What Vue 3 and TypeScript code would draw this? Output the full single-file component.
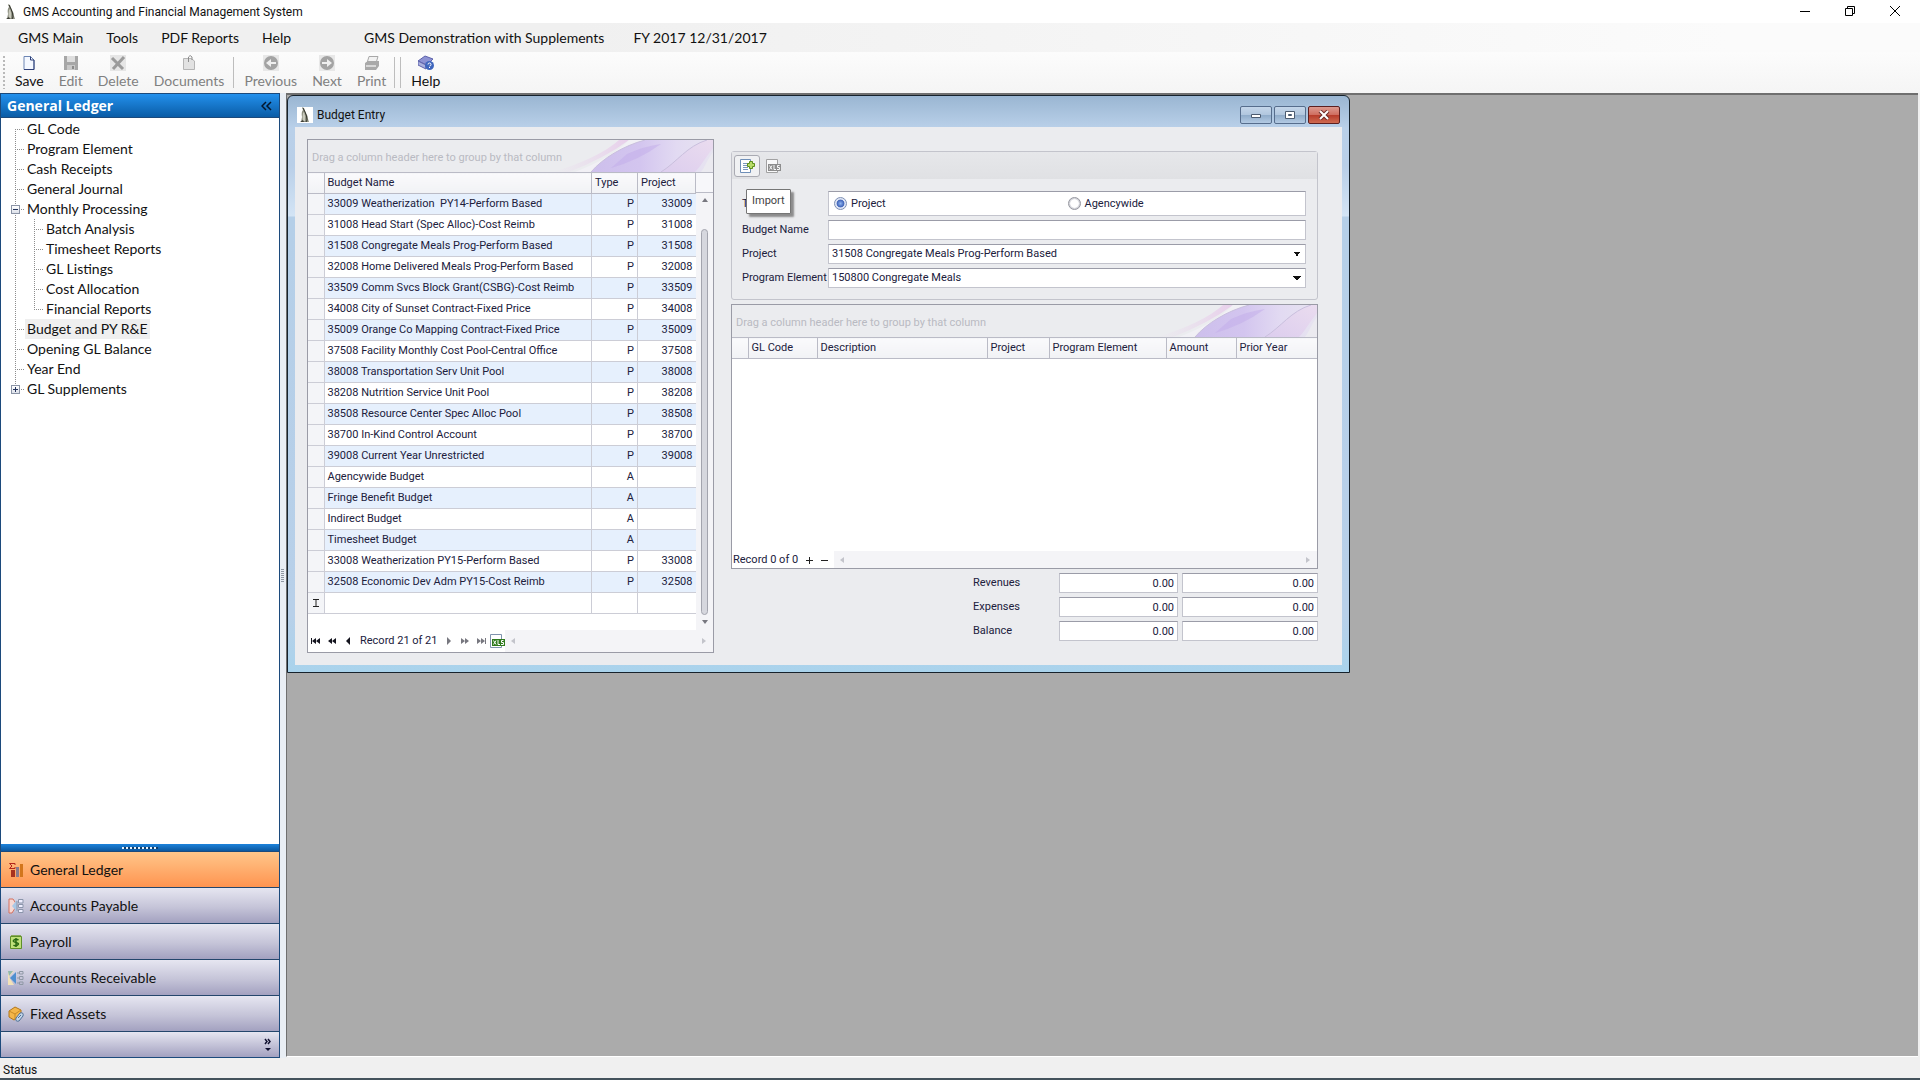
<script setup lang="ts">
import { ref } from 'vue'

interface Branch { label: string; child?: boolean; toggle?: string; selected?: boolean; edge?: string }
interface Budget { name: string; type: string; project: string }
interface Tool { label: string; icon: string; enabled?: boolean }

const menus = ['GMS Main', 'Tools', 'PDF Reports', 'Help']

const tools: Tool[][] = [
  [
    { label: 'Save', icon: 'save', enabled: true },
    { label: 'Edit', icon: 'edit' },
    { label: 'Delete', icon: 'delete' },
    { label: 'Documents', icon: 'documents' },
  ],
  [
    { label: 'Previous', icon: 'previous' },
    { label: 'Next', icon: 'next' },
    { label: 'Print', icon: 'print' },
  ],
  [],
  [{ label: 'Help', icon: 'help', enabled: true }],
]

const tree: Branch[] = [
  { label: 'GL Code', edge: 'first' },
  { label: 'Program Element' },
  { label: 'Cash Receipts' },
  { label: 'General Journal' },
  { label: 'Monthly Processing', toggle: 'minus' },
  { label: 'Batch Analysis', child: true },
  { label: 'Timesheet Reports', child: true },
  { label: 'GL Listings', child: true },
  { label: 'Cost Allocation', child: true },
  { label: 'Financial Reports', child: true, edge: 'last' },
  { label: 'Budget and PY R&E', selected: true },
  { label: 'Opening GL Balance' },
  { label: 'Year End' },
  { label: 'GL Supplements', toggle: 'plus', edge: 'last' },
]

const modules = [
  { label: 'General Ledger', icon: 'ledger' },
  { label: 'Accounts Payable', icon: 'payable' },
  { label: 'Payroll', icon: 'payroll' },
  { label: 'Accounts Receivable', icon: 'receivable' },
  { label: 'Fixed Assets', icon: 'assets' },
]
const activeModule = ref('General Ledger')

const budgets: Budget[] = [
  { name: '33009 Weatherization  PY14-Perform Based', type: 'P', project: '33009' },
  { name: '31008 Head Start (Spec Alloc)-Cost Reimb', type: 'P', project: '31008' },
  { name: '31508 Congregate Meals Prog-Perform Based', type: 'P', project: '31508' },
  { name: '32008 Home Delivered Meals Prog-Perform Based', type: 'P', project: '32008' },
  { name: '33509 Comm Svcs Block Grant(CSBG)-Cost Reimb', type: 'P', project: '33509' },
  { name: '34008 City of Sunset Contract-Fixed Price', type: 'P', project: '34008' },
  { name: '35009 Orange Co Mapping Contract-Fixed Price', type: 'P', project: '35009' },
  { name: '37508 Facility Monthly Cost Pool-Central Office', type: 'P', project: '37508' },
  { name: '38008 Transportation Serv Unit Pool', type: 'P', project: '38008' },
  { name: '38208 Nutrition Service Unit Pool', type: 'P', project: '38208' },
  { name: '38508 Resource Center Spec Alloc Pool', type: 'P', project: '38508' },
  { name: '38700 In-Kind Control Account', type: 'P', project: '38700' },
  { name: '39008 Current Year Unrestricted', type: 'P', project: '39008' },
  { name: 'Agencywide Budget', type: 'A', project: '' },
  { name: 'Fringe Benefit Budget', type: 'A', project: '' },
  { name: 'Indirect Budget', type: 'A', project: '' },
  { name: 'Timesheet Budget', type: 'A', project: '' },
  { name: '33008 Weatherization PY15-Perform Based', type: 'P', project: '33008' },
  { name: '32508 Economic Dev Adm PY15-Cost Reimb', type: 'P', project: '32508' },
]

const detailColumns = ['GL Code', 'Description', 'Project', 'Program Element', 'Amount', 'Prior Year']
const totals = ['Revenues', 'Expenses', 'Balance']

const scope = ref('project')
const budgetName = ref('')
</script>

<template>
  <div class="app">
    <svg class="defs" aria-hidden="true">
      <defs>
        <linearGradient id="pinkWash" x1="0" y1="0" x2="1" y2="0">
          <stop offset="0" stop-color="#e9d9ec" stop-opacity="0" />
          <stop offset="1" stop-color="#e8cfeb" />
        </linearGradient>
        <linearGradient id="violetWash" x1="0" y1="0" x2="1" y2="0">
          <stop offset="0" stop-color="#cdbfec" />
          <stop offset="0.4" stop-color="#d3c5ef" />
          <stop offset="0.7" stop-color="#e2daf2" />
          <stop offset="1" stop-color="#e7e4f0" />
        </linearGradient>
        <linearGradient id="roseWash" x1="0" y1="1" x2="1" y2="0">
          <stop offset="0" stop-color="#dccdee" />
          <stop offset="1" stop-color="#eadcef" />
        </linearGradient>
        <symbol id="swirl" viewBox="0 0 160 32">
          <path d="M0 32Q46 18 66 0H76Q52 18 16 32Z" fill="url(#pinkWash)" />
          <path d="M22 32Q58 18 76 0H92Q66 12 38 32Z" fill="#f1f0f5" />
          <path d="M38 32C50 18 70 6 92 0H160V16L150 32Z" fill="url(#violetWash)" />
          <path d="M58 28Q86 20 108 4Q92 6 74 14Z" fill="#c1abea" opacity=".5" />
          <path d="M108 32C124 22 134 6 154 0H160V8C152 18 148 26 142 32Z" fill="url(#roseWash)" />
          <path d="M160 12C154 20 152 27 148 32H160Z" fill="#ebeaf0" />
          <path d="M38 32C50 18 70 6 92 0M108 32C124 22 134 6 154 0" fill="none" stroke="#c9bfdd" />
        </symbol>
        <symbol id="penguin" viewBox="0 0 16 16">
          <path d="M5 0L7 1Q8 4 9 6Q11 9 11 12L12 15H8L4 15L5 10Q4 5 6 3Z" fill="#8d8f80" />
          <path d="M6 1L8 5Q10 9 10 13L9 15" fill="none" stroke="#33342c" />
          <path d="M6 6Q5 10 6 14H8Q9 9 7 5Z" fill="#c9cabd" />
          <path d="M3 15H7L6 13Z" fill="#3d3e36" />
        </symbol>
        <symbol id="xls" viewBox="0 0 16 16">
          <path d="M1.500 1.500H12.500V14.500H1.500Z" fill="#fff" stroke="#7f93ad" />
          <path d="M3 6H16V13H3Z" fill="currentColor" />
          <path d="M4.500 7.500L7 11.500M7 7.500L4.500 11.500M9 7V11.500H11M14.500 7.500H12.500V9.500H14.500V11.500H12" fill="none" stroke="#fff" />
        </symbol>
      </defs>
    </svg>

    <header class="titlebar">
      <svg class="icon16"><use href="#penguin" /></svg>
      <span class="caption">GMS Accounting and Financial Management System</span>
      <div class="syskeys">
        <button type="button" aria-label="Minimize"><svg viewBox="0 0 12 12"><path d="M1 6.500H11" /></svg></button>
        <button type="button" aria-label="Restore"><svg viewBox="0 0 12 12"><path d="M1.500 3.500H8.500V10.500H1.500ZM3.500 3V1.500H10.500V8.500H9" /></svg></button>
        <button type="button" aria-label="Close"><svg viewBox="0 0 12 12"><path d="M1 1L11 11M11 1L1 11" /></svg></button>
      </div>
    </header>

    <nav class="menubar">
      <button v-for="m in menus" :key="m" type="button">{{ m }}</button>
      <span class="company">GMS Demonstration with Supplements</span>
      <span class="year">FY 2017 12/31/2017</span>
    </nav>

    <div class="toolbar">
      <span class="grip"></span>
      <div v-for="(group, g) in tools" :key="g" class="toolgroup" :class="{ none: !group.length }">
        <button v-for="t in group" :key="t.label" type="button" :disabled="!t.enabled">
          <svg viewBox="0 0 16 16">
            <template v-if="t.icon === 'save'">
              <path d="M3 1.500H9.500L13 5V14.500H3Z" fill="#f4f8ff" stroke="#6d86b4" />
              <path d="M9.500 1.500V5H13V14.500H3" fill="none" stroke="#2f3f77" />
            </template>
            <template v-else-if="t.icon === 'edit'">
              <path d="M1 1H15V15H1Z" fill="#a7a7a7" />
              <path d="M4 1H12V7H4Z" fill="#dedede" />
              <path d="M4 10H12V15H4Z" fill="#c8c8c8" /><path d="M9 11H11V14H9Z" fill="#8a8a8a" />
            </template>
            <template v-else-if="t.icon === 'delete'">
              <path d="M0 0H16V16H0Z" fill="#e6e6e6" />
              <path d="M2 3L13 14M14 2L3 14" stroke="#9b9b9b" stroke-width="3" />
            </template>
            <template v-else-if="t.icon === 'documents'">
              <path d="M2.500 3.500H10L13.500 6V14.500H2.500Z" fill="#e2e2e2" stroke="#b5b5b5" />
              <path d="M7.500 7V2Q9 -1 11 2V5" fill="none" stroke="#8d8d8d" />
            </template>
            <template v-else-if="t.icon === 'previous'">
              <path d="M0 0H16V16H0Z" fill="#e8e8e8" /><circle cx="8" cy="8" r="7" fill="#a3a3a3" />
              <path d="M3 8L8 4V7H13V9H8V12Z" fill="#efefef" />
            </template>
            <template v-else-if="t.icon === 'next'">
              <path d="M0 0H16V16H0Z" fill="#e8e8e8" /><circle cx="8" cy="8" r="7" fill="#a3a3a3" />
              <path d="M13 8L8 4V7H3V9H8V12Z" fill="#efefef" />
            </template>
            <template v-else-if="t.icon === 'print'">
              <path d="M5 1.500H14L12 8H3Z" fill="#f2f2f2" stroke="#a8a8a8" />
              <path d="M1 8L4 6H15V11L12 15H1Z" fill="#a9a9a9" /><path d="M2 10H12V12H2Z" fill="#d8d8d8" />
            </template>
            <template v-else>
              <path d="M0 6L7 1L15 4L9 10Z" fill="#8d92d3" stroke="#5d62ab" />
              <path d="M0 6V10L8 14V10Z" fill="#aab0dd" stroke="#5d62ab" />
              <circle cx="11.500" cy="10.500" r="4.500" fill="#3f66bd" />
              <path d="M10 9.500Q10 8 11.500 8T13 9.500T11.500 11M11.500 12V13" fill="none" stroke="#fff" />
            </template>
          </svg>
          <span>{{ t.label }}</span>
        </button>
      </div>
    </div>

    <div class="body">
      <aside class="sidebar">
        <h2 class="panehead">
          <span>General Ledger</span>
          <button type="button" aria-label="Collapse"><svg viewBox="0 0 12 10"><path d="M5 1L1 5L5 9M10 1L6 5L10 9" /></svg></button>
        </h2>
        <ul class="tree">
          <li v-for="b in tree" :key="b.label" :class="[b.edge, { child: b.child }]">
            <span v-if="b.child" class="spine"></span>
            <span class="branch"></span>
            <button v-if="b.toggle" type="button" class="toggle" :aria-label="'Toggle ' + b.label">
              <svg viewBox="0 0 9 9"><path d="M2 4.500H7" /><path v-if="b.toggle === 'plus'" d="M4.500 2V7" /></svg>
            </button>
            <a href="#" :class="{ selected: b.selected }">{{ b.label }}</a>
          </li>
        </ul>
        <div class="splitter"><span></span></div>
        <button
          v-for="m in modules" :key="m.label" type="button" class="module"
          :class="{ active: m.label === activeModule }" @click="activeModule = m.label"
        >
          <svg viewBox="0 0 16 16">
            <template v-if="m.icon === 'ledger'">
              <path d="M7 3V1.500H1.500L4 4L1.500 6.500H7V5" fill="none" stroke="#b3261c" />
              <path d="M3 8H7V15H3Z" fill="#a8321f" /><path d="M8 5H11V15H8Z" fill="#8a7b8c" /><path d="M12 2H15V15H12Z" fill="#d2761c" />
            </template>
            <template v-else-if="m.icon === 'payable'">
              <path d="M1 1H5L9 7L4 15H1Z" fill="#f6d9d4" stroke="#d5715f" />
              <path d="M9 2L4 8L9 14Z" fill="#a9c8e6" />
              <path d="M10.500 1.500H15V5H10.500ZM10.500 6.500H15V9.500H10.500ZM10.500 11.500H15V14.500H10.500ZM9 3V13" fill="#eef" stroke="#8b95ab" />
            </template>
            <template v-else-if="m.icon === 'payroll'">
              <path d="M2.500 2.500H13.500V14.500H2.500Z" fill="#bfe07a" stroke="#5f8f2a" />
              <path d="M3 1.500H13" stroke="#8aa85d" />
              <path d="M10.500 6Q8 4.500 6 6T8 8.500T9.500 11T5.500 11M8 4V13" fill="none" stroke="#2c6a14" stroke-width="1.500" />
            </template>
            <template v-else-if="m.icon === 'receivable'">
              <path d="M0 1H6L1 7L6 15H0Z" fill="#f2e2b8" /><path d="M0 1H5L1 6Z" fill="#8fb7ae" />
              <path d="M8 2L2 8L8 14Z" fill="#4f8fd0" />
              <path d="M11.500 1.500H15V4H11.500ZM11.500 6.500H15V9.500H11.500ZM11.500 12H15V14.500H11.500ZM11 3H9M11 8H9M11 13H9" fill="none" stroke="#8f98a5" />
            </template>
            <template v-else>
              <path d="M1 5L7 1L13 4V10L6 14L1 11Z" fill="#f3b64a" stroke="#b2761b" />
              <path d="M1 5L7 8L13 4M7 8V14" fill="none" stroke="#c98a25" />
              <path d="M8 12L12 7Q16 6 15 10L11 15Q7 16 8 12Z" fill="#c4d6e8" stroke="#4e6f96" />
              <path d="M10 12L13 9" stroke="#4e6f96" />
            </template>
          </svg>
          <span>{{ m.label }}</span>
        </button>
        <div class="overflow">
          <button type="button" aria-label="Configure buttons">
            <svg viewBox="0 0 8 14"><path d="M1 1L3 3.500L1 6M4 1L6 3.500L4 6" fill="none" stroke="#101030" stroke-width="1.500" /><path d="M1 10H7L4 13Z" fill="#101030" /></svg>
          </button>
        </div>
      </aside>

      <div class="gutter"><span></span></div>

      <main class="workspace">
        <section class="window">
          <header class="wintitle">
            <svg class="icon16 white"><use href="#penguin" /></svg>
            <h1>Budget Entry</h1>
            <div class="winkeys">
              <button type="button" aria-label="Minimize window"><svg viewBox="0 0 14 10"><path d="M2.500 4.500H11.500V7.500H2.500Z" fill="#fff" stroke="#4b5b70" /></svg></button>
              <button type="button" aria-label="Maximize window"><svg viewBox="0 0 14 10"><path d="M2.500 1.500H11.500V8.500H2.500Z" fill="#fff" stroke="#4b5b70" /><path d="M5.500 4.500H8.500V5.500H5.500Z" fill="#9fb4cd" stroke="#4b5b70" /></svg></button>
              <button type="button" aria-label="Close window" class="close"><svg viewBox="0 0 14 10"><path d="M3 1L11 9M11 1L3 9" stroke="#6b2b28" stroke-width="4" /><path d="M3 1L11 9M11 1L3 9" stroke="#fff" stroke-width="2" /></svg></button>
            </div>
          </header>

          <div class="client">
            <div class="grid budgetgrid">
              <div class="groupbar">
                <span>Drag a column header here to group by that column</span>
                <svg><use href="#swirl" /></svg>
              </div>
              <div class="rows">
                <table>
                  <colgroup><col class="w-ind" /><col /><col class="w-type" /><col class="w-proj" /></colgroup>
                  <thead>
                    <tr><th></th><th>Budget Name</th><th>Type</th><th>Project</th></tr>
                  </thead>
                  <tbody>
                    <tr v-for="b in budgets" :key="b.name">
                      <td class="ind"></td><td>{{ b.name }}</td><td class="num">{{ b.type }}</td><td class="num">{{ b.project }}</td>
                    </tr>
                    <tr>
                      <td class="ind"><svg viewBox="0 0 8 10"><path d="M1 1.500H7M4 1V9M1 8.500H7" /></svg></td><td></td><td></td><td></td>
                    </tr>
                  </tbody>
                </table>
                <div class="vscroll">
                  <span class="corner"></span>
                  <svg viewBox="0 0 8 6"><path d="M1 5H7L4 1Z" /></svg>
                  <span class="thumb"></span>
                  <svg viewBox="0 0 8 6"><path d="M1 1H7L4 5Z" /></svg>
                </div>
              </div>
              <footer class="navigator">
                <button type="button" aria-label="First"><svg viewBox="0 0 12 8"><path d="M1 1H2V7H1ZM2 4L6 1V7ZM6 4L10 1V7Z" /></svg></button>
                <button type="button" aria-label="Previous page"><svg viewBox="0 0 12 8"><path d="M2 4L6 1V7ZM6 4L10 1V7Z" /></svg></button>
                <button type="button" aria-label="Previous record"><svg viewBox="0 0 12 8"><path d="M4 4L8 0V8Z" /></svg></button>
                <span class="record">Record 21 of 21</span>
                <button type="button" class="dim" aria-label="Next record"><svg viewBox="0 0 12 8"><path d="M8 4L4 0V8Z" /></svg></button>
                <button type="button" class="dim" aria-label="Next page"><svg viewBox="0 0 12 8"><path d="M6 4L2 1V7ZM10 4L6 1V7Z" /></svg></button>
                <button type="button" class="dim" aria-label="Last"><svg viewBox="0 0 12 8"><path d="M10 1H11V7H10ZM10 4L6 1V7ZM6 4L2 1V7Z" /></svg></button>
                <button type="button" class="export" aria-label="Export to XLS"><svg class="icon16"><use href="#xls" /></svg></button>
                <div class="hscroll">
                  <svg viewBox="0 0 6 8"><path d="M5 1V7L1 4Z" /></svg>
                  <svg viewBox="0 0 6 8"><path d="M1 1V7L5 4Z" /></svg>
                </div>
              </footer>
            </div>

            <div class="detail">
              <div class="formbox">
                <div class="formtools">
                  <button type="button" class="hot" aria-label="Import">
                    <svg class="icon16" viewBox="0 0 16 16">
                      <path d="M1.500 1.500H11.500V14.500H1.500Z" fill="#fff" stroke="#6f8fb8" />
                      <path d="M4 5.500H9M4 7.500H8M4 9.500H9M4 11.500H9" stroke="#7c98bd" />
                      <path d="M8.500 5.500H10.500V3.500H13.500V5.500H15.500V8.500H13.500V10.500H10.500V8.500H8.500Z" fill="#b8dc6a" stroke="#5c8f1c" />
                    </svg>
                  </button>
                  <button type="button" disabled aria-label="Export"><svg class="icon16"><use href="#xls" /></svg></button>
                  <span class="tip" role="tooltip">Import</span>
                </div>
                <div class="fields">
                  <span>Type</span>
                  <div class="radios">
                    <label><input v-model="scope" type="radio" name="scope" value="project" />Project</label>
                    <label><input v-model="scope" type="radio" name="scope" value="agency" />Agencywide</label>
                  </div>
                  <label for="budget-name">Budget Name</label>
                  <input id="budget-name" v-model="budgetName" class="box" type="text" />
                  <label for="project">Project</label>
                  <select id="project" class="box"><option>31508 Congregate Meals Prog-Perform Based</option></select>
                  <label for="element">Program Element</label>
                  <select id="element" class="box"><option>150800 Congregate Meals</option></select>
                </div>
              </div>

              <div class="grid detailgrid">
                <div class="groupbar">
                  <span>Drag a column header here to group by that column</span>
                  <svg><use href="#swirl" /></svg>
                </div>
                <table>
                  <colgroup><col class="w-ind" /><col class="w-code" /><col /><col class="w-dproj" /><col class="w-elem" /><col class="w-amt" /><col class="w-prior" /></colgroup>
                  <thead>
                    <tr><th></th><th v-for="c in detailColumns" :key="c">{{ c }}</th></tr>
                  </thead>
                </table>
                <div class="empty"></div>
                <footer class="navigator small">
                  <span>Record 0 of 0</span>
                  <button type="button" aria-label="Append"><svg viewBox="0 0 8 8"><path d="M1 4.500H8M4.500 1V8" /></svg></button>
                  <button type="button" class="dim" aria-label="Remove"><svg viewBox="0 0 8 8"><path d="M1 4.500H8" /></svg></button>
                  <div class="hscroll">
                    <svg viewBox="0 0 6 8"><path d="M5 1V7L1 4Z" /></svg>
                    <svg viewBox="0 0 6 8"><path d="M1 1V7L5 4Z" /></svg>
                  </div>
                </footer>
              </div>

              <div class="totals">
                <template v-for="t in totals" :key="t">
                  <label :for="'total-' + t">{{ t }}</label>
                  <input :id="'total-' + t" class="box" type="text" value="0.00" readonly />
                  <input class="box" type="text" value="0.00" readonly :aria-label="t + ' prior year'" />
                </template>
              </div>
            </div>
          </div>
        </section>
      </main>
    </div>

    <footer class="status">Status</footer>
  </div>
</template>

<style>
body {
  background: #efefef;
}
</style>

<style scoped>
.app {
  display: flex;
  flex-direction: column;
  min-height: 100vh;
  box-sizing: border-box;
  border-bottom: 2px solid #44525c;
  background: #f0f0f0;
  color: #111;
  font: 14px/20px Lato, "Open Sans", sans-serif;
}
.app *,
.app *::before {
  box-sizing: border-box;
}
.defs {
  position: absolute;
  width: 0;
  height: 0;
}
button {
  margin: 0;
  padding: 0;
  border: 0;
  background: none;
  color: inherit;
  font: inherit;
}
svg {
  display: block;
  flex: none;
}
.icon16 {
  width: 16px;
  height: 16px;
}

.titlebar {
  display: flex;
  align-items: center;
  height: 23px;
  padding-left: 3px;
  background: #fff;
  font: 12px/16px Roboto, sans-serif;
}
.caption {
  margin-left: 4px;
}
.syskeys {
  display: flex;
  gap: 33px;
  margin: 0 19px 2px auto;
}
.syskeys svg {
  width: 12px;
  height: 12px;
  fill: none;
  stroke: #000;
}
.menubar {
  display: flex;
  align-items: center;
  gap: 23px;
  height: 29px;
  padding-left: 18px;
  background: linear-gradient(90deg, #f0f0f0 30%, #fbfbfb 90%);
}
.company {
  margin-left: 50px;
}
.year {
  margin-left: 6px;
}

.toolbar {
  display: flex;
  height: 41px;
  padding-left: 3px;
  background: linear-gradient(#fcfcfc, #f5f5f5);
}
.grip {
  width: 2px;
  margin: 4px 0;
  background: repeating-linear-gradient(#b9b9b9 0 2px, transparent 2px 4px);
}
.toolgroup {
  display: flex;
  gap: 15px;
  padding: 3px 9px 0 10px;
}
.toolgroup + .toolgroup {
  margin: 5px 0;
  padding: 0 8px 0 10px;
  border-left: 1px solid #bdbdbd;
}
.toolgroup + .none {
  width: 6px;
  padding: 0;
}
.toolgroup + .toolgroup > button {
  margin-top: -2px;
}
.toolgroup button {
  display: flex;
  flex-direction: column;
  align-items: center;
}
.toolgroup button:disabled {
  color: #808080;
}
.toolgroup svg {
  width: 16px;
  height: 16px;
}

.body {
  display: flex;
  flex: 1;
}
.sidebar {
  display: flex;
  flex-direction: column;
  width: 280px;
  border: 1px solid #1c4a7c;
  background: #fff;
}
.panehead {
  display: flex;
  align-items: center;
  justify-content: space-between;
  height: 24px;
  margin: 0;
  padding: 0 6px;
  background: linear-gradient(#2390ec, #0a5ca6);
  border-bottom: 1px solid #1c4a7c;
  color: #fff;
  font: bold 14px/22px "Open Sans", sans-serif;
}
.panehead svg {
  width: 12px;
  height: 10px;
  fill: none;
  stroke: #04162c;
  stroke-width: 1.5;
}
.tree {
  flex: 1;
  margin: 0;
  padding: 1px 0 0 14px;
  list-style: none;
}
.tree li {
  position: relative;
  display: flex;
  height: 20px;
}
.spine,
.branch {
  background:
    repeating-linear-gradient(#8d8d8d 0 1px, transparent 1px 2px) 0 0 / 1px 20px no-repeat,
    repeating-linear-gradient(90deg, #8d8d8d 0 1px, transparent 1px 2px) 0 10px / 9px 1px no-repeat;
}
.spine {
  width: 19px;
  background-size: 1px 20px, 0 0;
}
.branch {
  width: 10px;
}
.first .branch {
  background-position: 0 10px, 0 10px;
}
.last .branch {
  background-size: 1px 10px, 9px 1px;
}
.toggle {
  position: absolute;
  left: -4px;
  top: 6px;
  width: 9px;
  height: 9px;
  border: 1px solid #8a93a5;
  background: linear-gradient(#fff, #dde1ea);
}
.toggle svg {
  width: 9px;
  height: 9px;
  margin: -1px;
  stroke: #24345c;
}
.tree a {
  padding: 0 2px;
  color: #111;
  text-decoration: none;
}
.tree .selected {
  background: #efefef;
}
.splitter {
  height: 8px;
  padding-top: 3px;
  background: linear-gradient(#1d83dc, #0b579e);
  border-bottom: 1px solid #1c4a7c;
}
.splitter span {
  display: block;
  width: 36px;
  height: 2px;
  margin: 0 auto;
  background: repeating-linear-gradient(90deg, #e8f2fb 0 2px, #123d68 2px 4px);
}
.module {
  display: flex;
  align-items: center;
  gap: 6px;
  height: 36px;
  padding-left: 7px;
  border-bottom: 1px solid #24466c;
  background: linear-gradient(#e6e6f1, #c5c4d8 55%, #a3a1c0);
}
.module.active {
  background: linear-gradient(#ffc68a, #ff9450);
}
.module svg {
  width: 16px;
  height: 16px;
}
.overflow {
  display: flex;
  justify-content: flex-end;
  height: 25px;
  padding: 5px 7px;
  background: linear-gradient(#e6e6f1, #a3a1c0);
}
.overflow svg {
  width: 8px;
  height: 14px;
}
.gutter {
  display: flex;
  align-items: center;
  width: 6px;
  background: #e9eef4;
}
.gutter span {
  width: 3px;
  height: 14px;
  margin-left: 1px;
  background: repeating-linear-gradient(#8f97a2 0 1px, transparent 1px 2px);
}

.workspace {
  flex: 1;
  margin: 0 2px 1px 0;
  border: solid #6f6f6f;
  border-width: 2px 0 0 1px;
  border-bottom: 1px solid #fff;
  background: #ababab;
}
.window {
  max-width: 1063px;
  border: 1px solid #16222c;
  border-radius: 6px 6px 0 0;
  padding: 0 7px 7px;
  background: linear-gradient(#9ab6d2, #b9d0e9 32px, #b9cfe8 70px, #d3e4f5 120px, #b5cfe8 121px, #b8d0e9 90%, #a9d3ec);
  color: #20203c;
  font: 11px/16px Roboto, "DejaVu Sans Condensed", sans-serif;
}
.wintitle {
  display: flex;
  align-items: center;
  height: 31px;
  padding: 6px 0 0 2px;
}
.white {
  background: #fff;
}
.wintitle h1 {
  margin: 0 auto 0 4px;
  color: #111;
  font: 12px/16px Roboto, sans-serif;
}
.winkeys {
  display: flex;
  gap: 2px;
  margin-right: 2px;
}
.winkeys button {
  display: flex;
  align-items: center;
  justify-content: center;
  width: 32px;
  height: 18px;
  border: 1px solid #566d8c;
  border-radius: 2px;
  background: linear-gradient(#c4d6ea, #b0c6de 50%, #8fabc9 50%, #b3cae3);
}
.winkeys .close {
  border-color: #5c1f20;
  background: linear-gradient(#dc9a90, #cf6c5e 50%, #b63a2a 50%, #cf6a50);
}
.winkeys svg {
  width: 14px;
  height: 10px;
}

.client {
  display: flex;
  gap: 17px;
  padding: 12px 24px 12px 12px;
  background: #ebecef;
}
.grid {
  display: flex;
  flex-direction: column;
  border: 1px solid #9a9ba6;
  background: #fff;
}
.budgetgrid {
  width: 407px;
}
.groupbar {
  display: flex;
  align-items: center;
  height: 32px;
  padding-left: 4px;
  background: #ebecef;
  color: #b9bac2;
  white-space: nowrap;
}
.groupbar svg {
  width: 160px;
  height: 32px;
  margin-left: auto;
}
.groupbar span {
  width: 0;
  overflow: visible;
  padding-top: 3px;
}
table {
  width: 100%;
  border-collapse: collapse;
  table-layout: fixed;
}
th,
td {
  height: 21px;
  padding: 0 3px;
  border: solid #cccdd6;
  border-width: 0 1px 1px 0;
  text-align: left;
  font-weight: normal;
  white-space: pre;
}
th {
  border-color: #babbc6;
  border-top-width: 1px;
  background: linear-gradient(#fafafc, #f1f2f5);
}
.rows {
  display: flex;
}
.rows table {
  flex: 1;
}
tbody tr:nth-child(odd) td {
  background: #e6f0fd;
}
tbody tr:last-child td {
  background: #fff;
}
tbody tr:nth-child(n) .ind {
  background: #f4f5f8;
}
tbody td:last-child {
  border-right: 0;
}
.num {
  text-align: right;
}
.ind svg {
  width: 8px;
  height: 10px;
  margin: 0 auto;
  fill: none;
  stroke: #222;
}
.w-ind { width: 16px; }
.w-type { width: 46px; }
.w-proj { width: 58px; }
.w-code { width: 69px; }
.w-dproj { width: 62px; }
.w-elem { width: 117px; }
.w-amt { width: 70px; }
.w-prior { width: 81px; }
.vscroll {
  display: flex;
  flex-direction: column;
  align-items: center;
  gap: 4px;
  width: 17px;
  margin-bottom: -16px;
  padding-bottom: 5px;
  background: #f4f4f7;
}
.corner {
  align-self: stretch;
  height: 21px;
  border: solid #babbc6;
  border-width: 1px 0;
  background: #f7f7fa;
}
.vscroll svg {
  width: 8px;
  height: 6px;
  fill: #77777f;
}
.thumb {
  flex: 1;
  width: 7px;
  margin-top: 22px;
  border: 1px solid #a3a4ae;
  border-radius: 4px;
  background: #d6d7de;
}
.navigator {
  display: flex;
  align-items: center;
  height: 22px;
  margin-top: 16px;
  padding-left: 2px;
}
.navigator button {
  margin-right: 4px;
}
.navigator button svg {
  width: 12px;
  height: 8px;
  fill: #15151f;
}
.navigator .dim svg {
  fill: #77777f;
}
.navigator .record {
  margin: 0 6px 0 2px;
  white-space: nowrap;
}
.navigator .export {
  margin: 0 0 0 -2px;
  color: #2f7a1d;
}
.navigator .export svg {
  width: 16px;
  height: 16px;
}
.hscroll {
  display: flex;
  flex: 1;
  align-items: center;
  align-self: stretch;
  justify-content: space-between;
  padding: 0 6px 0 5px;
  background: #f4f4f7;
}
.hscroll svg {
  width: 6px;
  height: 8px;
  fill: #c3c4cb;
}
.navigator.small {
  height: 17px;
  margin-top: 0;
  padding-left: 1px;
}
.small button {
  margin: 0 0 0 7px;
}
.navigator.small button svg {
  width: 8px;
  height: 8px;
  stroke: #222;
}
.small .hscroll {
  margin-left: 6px;
}

.detail {
  flex: 1;
  padding-top: 12px;
}
.formbox {
  border: 1px solid #c3c4cc;
  border-radius: 3px;
  height: 149px;
}
.formtools {
  position: relative;
  display: flex;
  align-items: center;
  height: 27px;
  padding-left: 2px;
  background: linear-gradient(#e6e7ea, #e0e1e4);
}
.formtools button {
  display: flex;
  align-items: center;
  justify-content: center;
  width: 26px;
  height: 22px;
  color: #77787c;
}
.formtools button:disabled {
  filter: grayscale(1);
  opacity: .8;
}
.formtools .hot {
  border: 1px solid #a9aab2;
  border-radius: 3px;
  background: #f0f1f3;
}
.tip {
  position: absolute;
  left: 14px;
  top: 37px;
  padding: 3px 5px 4px;
  border: 1px solid #767676;
  border-radius: 1px;
  background: #fff;
  box-shadow: 3px 3px 2px #8c8c8c;
  color: #444;
}
.fields {
  display: grid;
  grid-template-columns: 76px 1fr;
  column-gap: 10px;
  row-gap: 4px;
  align-items: center;
  padding: 12px 11px 0 10px;
}
.fields > label {
  white-space: nowrap;
}
.radios,
.box {
  width: 100%;
  border: 1px solid #c3c4cd;
  border-top-color: #9b9ca8;
  border-radius: 0;
  background: #fff;
  color: inherit;
  font: inherit;
}
.box {
  height: 20px;
  padding: 0 3px;
}
select.box {
  appearance: none;
  background:
    linear-gradient(45deg, transparent 50%, #111 50%) right 8px top 7px / 4px 4px no-repeat,
    linear-gradient(315deg, transparent 50%, #111 50%) right 4px top 7px / 4px 4px no-repeat,
    #fff;
}
.radios {
  display: grid;
  grid-template-columns: 1fr 1fr;
  align-items: center;
  height: 25px;
  padding: 0 4px 0 5px;
}
.radios label {
  display: flex;
  align-items: center;
  gap: 4px;
}
.radios input {
  appearance: none;
  width: 13px;
  height: 13px;
  margin: 0;
  border: 1px solid #9697a0;
  border-radius: 50%;
  background: radial-gradient(#fff 50%, #d5d6dc 60%);
}
.radios input:checked {
  border-color: #7d8fb5;
  background: radial-gradient(circle at 50% 50%, #8fb4f0, #3f63b8 45%, #dfe6f5 55%);
}

.detailgrid {
  margin-top: 4px;
}
.detailgrid th:last-child {
  border-right: 0;
}
.empty {
  height: 192px;
}
.totals {
  display: grid;
  grid-template-columns: 82px 119px 136px;
  gap: 4px;
  justify-content: end;
  align-items: center;
  padding-top: 4px;
}
.totals .box {
  text-align: right;
}

.status {
  height: 20px;
  padding: 2px 0 0 3px;
  font: 12px/20px Roboto, sans-serif;
}
</style>
